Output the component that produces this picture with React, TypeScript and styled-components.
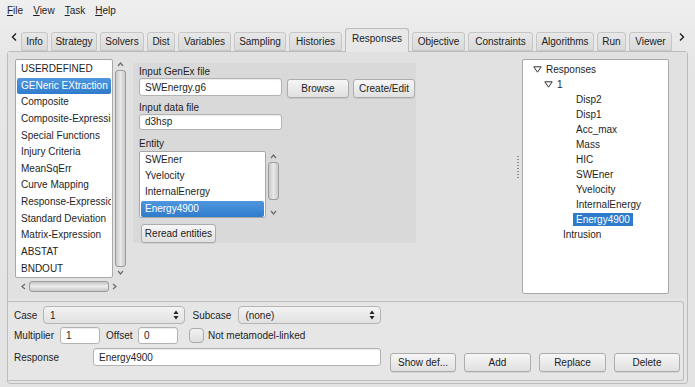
import React from 'react';
import styled, { createGlobalStyle } from 'styled-components';

const GlobalStyle = createGlobalStyle`
  html, body { margin: 0; padding: 0; }
  body {
    font-family: "Liberation Sans", Arial, sans-serif;
    font-size: 10px;
    color: #1e1e1e;
  }
`;

const Window = styled.div`
  width: 695px;
  height: 387px;
  overflow: hidden;
  display: flex;
  flex-direction: column;
  background: linear-gradient(#efefef, #e6e6e6 60px, #e3e3e3);
`;

const MenuBar = styled.div`
  height: 20px;
  display: flex;
  align-items: center;
  padding-left: 7px;
  gap: 10px;
  font-size: 10px;
`;

const MenuItem = styled.span`
  u { text-decoration: underline; }
`;

const TabBar = styled.div`
  margin-top: 8px;
  height: 23px;
  display: flex;
  align-items: flex-end;
  padding-left: 7px;
  position: relative;
  z-index: 2;
`;

const Arrow = styled.div<{ $w: number }>`
  width: ${(p) => p.$w}px;
  height: 23px;
  display: flex;
  align-items: center;
  justify-content: center;
  padding-bottom: 6px;
  box-sizing: border-box;
`;

const Tab = styled.div<{ $w: number; $active?: boolean }>`
  width: ${(p) => p.$w}px;
  box-sizing: border-box;
  margin-right: 3px;
  height: ${(p) => (p.$active ? 24 : 19)}px;
  margin-bottom: ${(p) => (p.$active ? -1 : 0)}px;
  padding-bottom: ${(p) => (p.$active ? 4 : 0)}px;
  display: flex;
  align-items: center;
  justify-content: center;
  border: 1px solid ${(p) => (p.$active ? '#bcbcbc' : '#c6c6c6')};
  border-bottom: ${(p) => (p.$active ? 'none' : '1px solid #c6c6c6')};
  border-radius: 3px 3px 0 0;
  background: ${(p) =>
    p.$active ? '#e8e8e8' : 'linear-gradient(#e8e8e8, #d9d9d9)'};
  color: #222;
`;

const Page = styled.div`
  margin: 0 7px;
  height: 333px;
  box-sizing: border-box;
  border: 1px solid #bcbcbc;
  border-radius: 3px;
  background: #e4e4e4;
  display: flex;
  flex-direction: column;
`;

const Upper = styled.div`
  height: 246px;
  box-sizing: border-box;
  padding: 7px 0 0 7px;
  display: flex;
  align-items: flex-start;
  background: #e1e1e1;
`;

const LeftPane = styled.div`
  width: 113px;
  display: flex;
  flex-direction: column;
`;

const ListRow = styled.div<{ $h: number }>`
  display: flex;
  height: ${(p) => p.$h}px;
`;

const ListBox = styled.div<{ $w: number }>`
  width: ${(p) => p.$w}px;
  box-sizing: border-box;
  border: 1px solid #a9a9a9;
  border-radius: 2px;
  background: #fff;
  padding: 1px 1px 0 1px;
  overflow: hidden;
`;

const ListItem = styled.div<{ $h: number; $sel?: boolean }>`
  height: ${(p) => p.$h}px;
  line-height: ${(p) => p.$h}px;
  padding-left: 4px;
  white-space: nowrap;
  overflow: hidden;
  border-radius: 2px;
  color: ${(p) => (p.$sel ? '#fff' : '#1e1e1e')};
  background: ${(p) =>
    p.$sel ? 'linear-gradient(#4f97de, #2f7ccc)' : 'transparent'};
`;

const VScroll = styled.div<{ $w: number }>`
  width: ${(p) => p.$w}px;
  display: flex;
  flex-direction: column;
  align-items: center;
  padding: 2px 0;
  box-sizing: border-box;
`;

const Thumb = styled.div<{ $vertical?: boolean; $len?: number }>`
  flex: ${(p) => (p.$len ? 'none' : '1')};
  width: ${(p) => (p.$vertical ? '11px' : 'auto')};
  height: ${(p) => (p.$vertical ? (p.$len ? `${p.$len}px` : 'auto') : '11px')};
  margin: 2px 0;
  box-sizing: border-box;
  border: 1px solid #9c9c9c;
  border-radius: 3px;
  background: ${(p) =>
    p.$vertical
      ? 'linear-gradient(90deg, #c9c9c9, #e9e9e9 50%, #c9c9c9)'
      : 'linear-gradient(#c6c6c6, #ececec 50%, #c6c6c6)'};
`;

const Fill = styled.div`
  flex: 1;
`;

const HScroll = styled.div`
  height: 14px;
  margin-top: 1px;
  display: flex;
  align-items: center;
  padding-left: 5px;
  width: 98px;
  gap: 2px;
`;

const MidPanel = styled.div`
  margin: 4px 0 0 5px;
  width: 283px;
  height: 180px;
  box-sizing: border-box;
  background: #d9d9d9;
  border-radius: 2px;
  padding: 1px 0 0 6px;
  display: flex;
  flex-direction: column;
`;

const FieldLabel = styled.div<{ $top?: number }>`
  height: 13px;
  line-height: 13px;
  margin-top: ${(p) => p.$top ?? 1}px;
`;

const FieldRow = styled.div`
  display: flex;
  align-items: flex-start;
  gap: 5px;
`;

const ButtonPair = styled.div`
  display: flex;
  gap: 4px;
  margin-top: 1px;
`;

const TextInput = styled.div<{ $w: number; $h?: number }>`
  width: ${(p) => p.$w}px;
  height: ${(p) => p.$h ?? 18}px;
  box-sizing: border-box;
  border: 1px solid #b3b3b3;
  border-radius: 3px;
  background: #fff;
  box-shadow: inset 0 1px 1px rgba(0, 0, 0, 0.08);
  padding-left: 5px;
  display: flex;
  align-items: center;
  white-space: nowrap;
`;

const Button = styled.div<{ $w: number }>`
  width: ${(p) => p.$w}px;
  height: 19px;
  box-sizing: border-box;
  border: 1px solid #acacac;
  border-radius: 3px;
  background: linear-gradient(#f6f6f6, #e0e0e0);
  box-shadow: 0 1px 0 rgba(0, 0, 0, 0.08);
  display: flex;
  align-items: center;
  justify-content: center;
  white-space: nowrap;
  color: #222;
`;

const EntityBlock = styled.div`
  display: flex;
  height: 68px;
  margin-top: 1px;
`;

const EntityList = styled(ListBox)`
  padding-top: 0;
`;

const ReadButtonWrap = styled.div`
  margin: 6px 0 0 2px;
`;

const Split = styled.div`
  flex: 1;
  display: flex;
  justify-content: flex-end;
  align-self: stretch;
  align-items: center;
  padding-right: 3px;
  padding-bottom: 22px;
`;

const Handle = styled.div`
  width: 2px;
  height: 24px;
  background: repeating-linear-gradient(#8d8d8d 0 1px, transparent 1px 3px);
`;

const TreeBox = styled.div`
  width: 147px;
  height: 235px;
  margin-right: 18px;
  box-sizing: border-box;
  border: 1px solid #a9a9a9;
  border-radius: 2px;
  background: #fff;
  padding-top: 2px;
`;

const TreeRow = styled.div<{ $indent: number }>`
  height: 15px;
  display: flex;
  align-items: center;
  padding-left: ${(p) => p.$indent}px;
`;

const Twist = styled.span`
  width: 13px;
  display: inline-flex;
`;

const TreeText = styled.span<{ $sel?: boolean }>`
  padding: 1px 3px;
  margin-left: -3px;
  color: ${(p) => (p.$sel ? '#fff' : '#1e1e1e')};
  background: ${(p) => (p.$sel ? '#2f7bcb' : 'transparent')};
`;

const Lower = styled.div`
  margin: 3px 3px 0 0;
  height: 80px;
  box-sizing: border-box;
  border: 1px solid #bdbdbd;
  border-left: none;
  border-radius: 0 3px 3px 0;
  background: #e6e6e6;
  display: flex;
  padding: 4px 0 0 6px;
`;

const LowerForm = styled.div`
  width: 367px;
  display: flex;
  flex-direction: column;
  gap: 3px;
`;

const FormRow = styled.div<{ $top?: number }>`
  display: flex;
  align-items: center;
  margin-top: ${(p) => p.$top ?? 0}px;
`;

const Label = styled.span<{ $w: number }>`
  width: ${(p) => p.$w}px;
  white-space: nowrap;
`;

const Combo = styled.div<{ $w: number }>`
  width: ${(p) => p.$w}px;
  height: 18px;
  box-sizing: border-box;
  border: 1px solid #b5b5b5;
  border-radius: 4px;
  background: linear-gradient(#f3f3f3, #e1e1e1);
  display: flex;
  align-items: center;
  justify-content: space-between;
  padding: 0 5px 0 6px;
`;

const Spacer = styled.span<{ $w: number }>`
  width: ${(p) => p.$w}px;
  flex: none;
`;

const Check = styled.span`
  width: 15px;
  height: 15px;
  box-sizing: border-box;
  border: 1px solid #ababab;
  border-radius: 4px;
  background: linear-gradient(#f2f2f2, #dedede);
`;

const ButtonBar = styled.div`
  align-self: flex-end;
  margin: 0 0 8px 9px;
  display: flex;
  gap: 8px;
`;

const Chevron = ({ dir, size = 7 }: { dir: 'up' | 'down' | 'left' | 'right'; size?: number }) => {
  const pts = {
    up: '1,5 3.5,2 6,5',
    down: '1,2 3.5,5 6,2',
    left: '5,1 2,3.5 5,6',
    right: '2,1 5,3.5 2,6',
  }[dir];
  return (
    <svg width={size} height={size} viewBox="0 0 7 7">
      <polyline points={pts} fill="none" stroke="#6a6a6a" strokeWidth="1.2" />
    </svg>
  );
};

const TabChevron = ({ dir }: { dir: 'left' | 'right' }) => (
  <svg width="6" height="8" viewBox="0 0 6 8">
    <polyline
      points={dir === 'left' ? '5,0.5 1.5,4 5,7.5' : '1,0.5 4.5,4 1,7.5'}
      fill="none"
      stroke="#1e1e1e"
      strokeWidth="1.4"
    />
  </svg>
);

const Tri = () => (
  <svg width="9" height="7" viewBox="0 0 9 7">
    <polygon points="0.8,0.8 8.2,0.8 4.5,6.2" fill="none" stroke="#333" strokeWidth="1" />
  </svg>
);

const SpinArrows = () => (
  <svg width="6" height="10" viewBox="0 0 6 10">
    <polygon points="0.5,4 3,0.5 5.5,4" fill="#222" />
    <polygon points="0.5,6 3,9.5 5.5,6" fill="#222" />
  </svg>
);

const tabs = [
  { name: 'Info', w: 27 },
  { name: 'Strategy', w: 46 },
  { name: 'Solvers', w: 44 },
  { name: 'Dist', w: 28 },
  { name: 'Variables', w: 53 },
  { name: 'Sampling', w: 52 },
  { name: 'Histories', w: 53 },
  { name: 'Responses', w: 64, active: true },
  { name: 'Objective', w: 53 },
  { name: 'Constraints', w: 65 },
  { name: 'Algorithms', w: 58 },
  { name: 'Run', w: 29 },
  { name: 'Viewer', w: 43 },
];

const types = [
  'USERDEFINED',
  'GENeric EXtraction',
  'Composite',
  'Composite-Expression',
  'Special Functions',
  'Injury Criteria',
  'MeanSqErr',
  'Curve Mapping',
  'Response-Expression',
  'Standard Deviation',
  'Matrix-Expression',
  'ABSTAT',
  'BNDOUT',
];

const entities = ['SWEner', 'Yvelocity', 'InternalEnergy', 'Energy4900'];

const responses = [
  'Disp2',
  'Disp1',
  'Acc_max',
  'Mass',
  'HIC',
  'SWEner',
  'Yvelocity',
  'InternalEnergy',
  'Energy4900',
];

const App = () => {
  return (
    <Window>
      <GlobalStyle />
      <MenuBar>
        <MenuItem><u>F</u>ile</MenuItem>
        <MenuItem><u>V</u>iew</MenuItem>
        <MenuItem><u>T</u>ask</MenuItem>
        <MenuItem><u>H</u>elp</MenuItem>
      </MenuBar>
      <TabBar>
        <Arrow $w={14}>
          <TabChevron dir="left" />
        </Arrow>
        {tabs.map((t) => (
          <Tab key={t.name} $w={t.w} $active={t.active}>
            {t.name}
          </Tab>
        ))}
        <Arrow $w={14}>
          <TabChevron dir="right" />
        </Arrow>
      </TabBar>
      <Page>
        <Upper>
          <LeftPane>
            <ListRow $h={219}>
              <ListBox $w={98}>
                {types.map((t, i) => (
                  <ListItem key={t} $h={16.65} $sel={i === 1}>
                    {t}
                  </ListItem>
                ))}
              </ListBox>
              <VScroll $w={15}>
                <Chevron dir="up" />
                <Thumb $vertical />
                <Chevron dir="down" />
              </VScroll>
            </ListRow>
            <HScroll>
              <Chevron dir="left" />
              <Thumb />
              <Chevron dir="right" />
            </HScroll>
          </LeftPane>

          <MidPanel>
            <FieldLabel>Input GenEx file</FieldLabel>
            <FieldRow>
              <TextInput $w={143}>SWEnergy.g6</TextInput>
              <ButtonPair>
                <Button $w={62}>Browse</Button>
                <Button $w={62}>Create/Edit</Button>
              </ButtonPair>
            </FieldRow>
            <FieldLabel $top={3}>Input data file</FieldLabel>
            <TextInput $w={143}>d3hsp</TextInput>
            <FieldLabel $top={7}>Entity</FieldLabel>
            <EntityBlock>
              <EntityList $w={127}>
                {entities.map((e, i) => (
                  <ListItem key={e} $h={16.3} $sel={i === 3}>
                    {e}
                  </ListItem>
                ))}
              </EntityList>
              <VScroll $w={14}>
                <Chevron dir="up" />
                <Thumb $vertical $len={38} />
                <Fill />
                <Chevron dir="down" />
              </VScroll>
            </EntityBlock>
            <ReadButtonWrap>
              <Button $w={75}>Reread entities</Button>
            </ReadButtonWrap>
          </MidPanel>

          <Split>
            <Handle />
          </Split>

          <TreeBox>
            <TreeRow $indent={10}>
              <Twist>
                <Tri />
              </Twist>
              <TreeText>Responses</TreeText>
            </TreeRow>
            <TreeRow $indent={21}>
              <Twist>
                <Tri />
              </Twist>
              <TreeText>1</TreeText>
            </TreeRow>
            {responses.map((r) => (
              <TreeRow key={r} $indent={53}>
                <TreeText $sel={r === 'Energy4900'}>{r}</TreeText>
              </TreeRow>
            ))}
            <TreeRow $indent={40}>
              <TreeText>Intrusion</TreeText>
            </TreeRow>
          </TreeBox>
        </Upper>

        <Lower>
          <LowerForm>
            <FormRow>
              <Label $w={29}>Case</Label>
              <Combo $w={142}>
                <span>1</span>
                <SpinArrows />
              </Combo>
              <Spacer $w={8} />
              <Label $w={46}>Subcase</Label>
              <Combo $w={143}>
                <span>(none)</span>
                <SpinArrows />
              </Combo>
            </FormRow>
            <FormRow>
              <Label $w={46}>Multiplier</Label>
              <TextInput $w={40} $h={17}>1</TextInput>
              <Spacer $w={6} />
              <Label $w={32}>Offset</Label>
              <TextInput $w={40} $h={17}>0</TextInput>
              <Spacer $w={11} />
              <Check />
              <Spacer $w={4} />
              <span>Not metamodel-linked</span>
            </FormRow>
            <FormRow $top={1}>
              <Label $w={79}>Response</Label>
              <TextInput $w={288}>Energy4900</TextInput>
            </FormRow>
          </LowerForm>
          <ButtonBar>
            <Button $w={66}>Show def...</Button>
            <Button $w={67}>Add</Button>
            <Button $w={67}>Replace</Button>
            <Button $w={66}>Delete</Button>
          </ButtonBar>
        </Lower>
      </Page>
    </Window>
  );
};

export default App;
